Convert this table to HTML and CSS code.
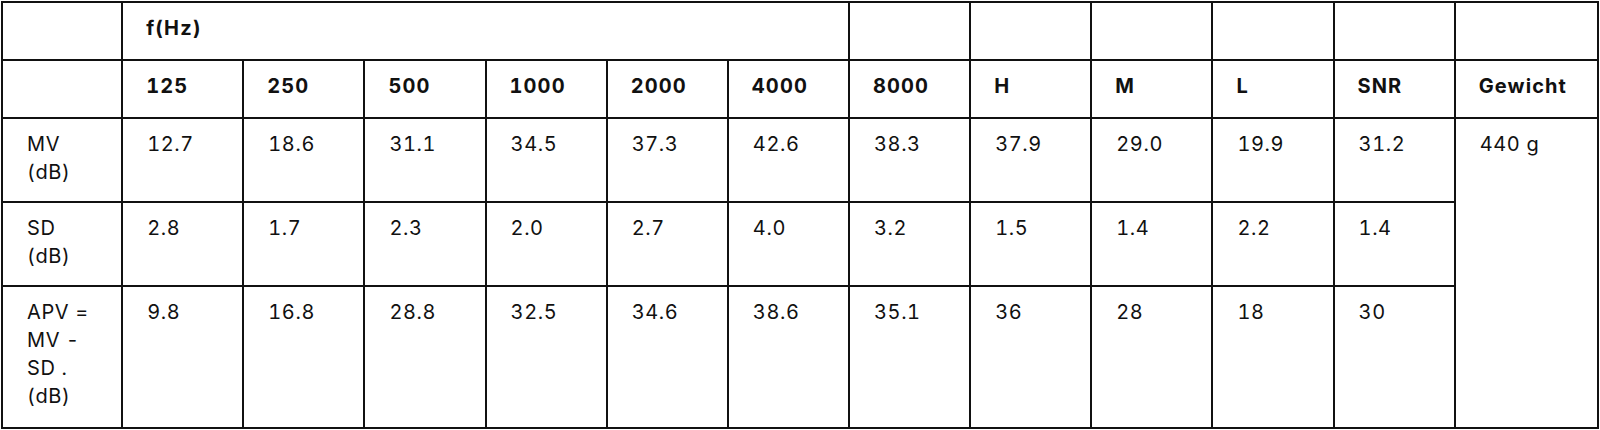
FILE: index.html
```html
<!DOCTYPE html>
<html lang="de">
<head>
    <meta charset="UTF-8">
    <meta name="viewport" content="width=device-width, initial-scale=1.0">
    <title>Dämmwerte</title>
    <link rel="stylesheet" href="styles.css">
</head>
<body>
    <table class="daempfung">
        <colgroup>
            <col class="col-label">
            <col class="col-val"><col class="col-val"><col class="col-val">
            <col class="col-val"><col class="col-val"><col class="col-val">
            <col class="col-val"><col class="col-val"><col class="col-val">
            <col class="col-val"><col class="col-val">
            <col class="col-last">
        </colgroup>
        <thead>
            <tr>
                <th></th>
                <th colspan="6">f(Hz)</th>
                <th></th>
                <th></th>
                <th></th>
                <th></th>
                <th></th>
                <th></th>
            </tr>
            <tr>
                <th></th>
                <th>125</th>
                <th>250</th>
                <th>500</th>
                <th>1000</th>
                <th>2000</th>
                <th>4000</th>
                <th>8000</th>
                <th>H</th>
                <th>M</th>
                <th>L</th>
                <th>SNR</th>
                <th>Gewicht</th>
            </tr>
        </thead>
        <tbody>
            <tr class="row-two">
                <td>MV<br>(dB)</td>
                <td>12.7</td>
                <td>18.6</td>
                <td>31.1</td>
                <td>34.5</td>
                <td>37.3</td>
                <td>42.6</td>
                <td>38.3</td>
                <td>37.9</td>
                <td>29.0</td>
                <td>19.9</td>
                <td>31.2</td>
                <td rowspan="3">440 g</td>
            </tr>
            <tr class="row-two">
                <td>SD<br>(dB)</td>
                <td>2.8</td>
                <td>1.7</td>
                <td>2.3</td>
                <td>2.0</td>
                <td>2.7</td>
                <td>4.0</td>
                <td>3.2</td>
                <td>1.5</td>
                <td>1.4</td>
                <td>2.2</td>
                <td>1.4</td>
            </tr>
            <tr>
                <td>APV =<br>MV -<br>SD .<br>(dB)</td>
                <td>9.8</td>
                <td>16.8</td>
                <td>28.8</td>
                <td>32.5</td>
                <td>34.6</td>
                <td>38.6</td>
                <td>35.1</td>
                <td>36</td>
                <td>28</td>
                <td>18</td>
                <td>30</td>
            </tr>
        </tbody>
    </table>
</body>
</html>
```

FILE: styles.css
```css
body {
    margin: 0;
    padding: 0;
    background: #fff;
    font-family: Inter, 'Liberation Sans', sans-serif;
    color: #111;
}

.daempfung {
    border-collapse: collapse;
    table-layout: fixed;
    width: 1598px;
    margin: 1px 0 0 1px;
}

.col-label {
    width: 120px;
}

.col-val {
    width: 121px;
}

.col-last {
    width: 143px;
}

.daempfung th,
.daempfung td {
    border: 2px solid #111;
    padding: 11px 22px 17px 24px;
    font-size: 20px;
    line-height: 28px;
    letter-spacing: 0.6px;
    font-feature-settings: "tnum" 1;
    text-align: left;
    vertical-align: top;
}

.daempfung th {
    font-weight: 700;
    letter-spacing: 1.1px;
    padding-left: 23px;
}

.daempfung td {
    font-weight: 400;
}

.row-two td {
    padding-bottom: 15px;
}
```
